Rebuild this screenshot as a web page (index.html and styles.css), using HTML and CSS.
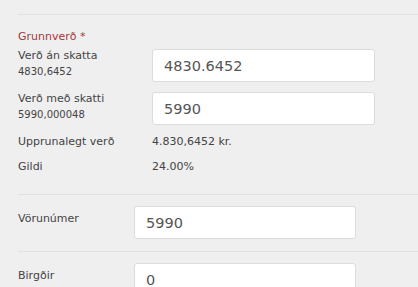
FILE: index.html
```html
<!DOCTYPE html>
<html>
<head>
<meta charset="utf-8">
<link rel="stylesheet" href="styles.css">
</head>
<body>
<div class="page">
  <hr class="rule">
  <section class="group">
    <div class="group-title">Grunnverð *</div>
    <div class="row">
      <div class="label">Verð án skatta<div class="sub">4830,6452</div></div>
      <div class="field wide">4830.6452</div>
    </div>
    <div class="row">
      <div class="label">Verð með skatti<div class="sub">5990,000048</div></div>
      <div class="field wide">5990</div>
    </div>
    <div class="info">
      <div class="label">Upprunalegt verð</div>
      <div class="value">4.830,6452 kr.</div>
    </div>
    <div class="info">
      <div class="label">Gildi</div>
      <div class="value">24.00%</div>
    </div>
  </section>
  <hr class="rule">
  <div class="row2">
    <div class="label2">Vörunúmer</div>
    <div class="field narrow">5990</div>
  </div>
  <hr class="rule">
  <div class="row2">
    <div class="label2">Birgðir</div>
    <div class="field narrow">0</div>
  </div>
</div>
</body>
</html>
```
FILE: styles.css
```css
html, body {
  margin: 0;
  padding: 0;
  background: #efefef;
}
body {
  font-family: "DejaVu Sans", Verdana, sans-serif;
  color: #444;
  font-size: 11px;
  overflow: hidden;
}
.page {
  padding-left: 18px;
  padding-top: 14px;
}
.rule {
  margin: 0;
  border: 0;
  border-top: 1px solid #e0e0e0;
  height: 0;
}
.group {
  padding-top: 15px;
  height: 164px;
}
.group-title {
  color: #a33a3a;
  font-size: 11px;
  line-height: 14px;
  margin-bottom: 5px;
}
.row {
  display: flex;
  align-items: flex-start;
  margin-bottom: 10px;
}
.label {
  width: 134px;
  flex: none;
  line-height: 14px;
}
.sub {
  font-size: 10px;
  line-height: 12px;
  margin-top: 3px;
}
.field {
  box-sizing: border-box;
  background: #fff;
  border: 1px solid #dcdcdc;
  border-radius: 3px;
  height: 33px;
  padding: 0 11px;
  display: flex;
  align-items: center;
  font-size: 14.5px;
  color: #555;
}
.wide { width: 223px; }
.narrow { width: 222px; }
.info {
  display: flex;
  line-height: 14px;
  margin-bottom: 11px;
}
.value { color: #444; }
.row2 {
  display: flex;
  align-items: flex-start;
  padding: 11px 0 12px;
}
.label2 {
  width: 116px;
  flex: none;
  padding-top: 6px;
  line-height: 14px;
}
```
